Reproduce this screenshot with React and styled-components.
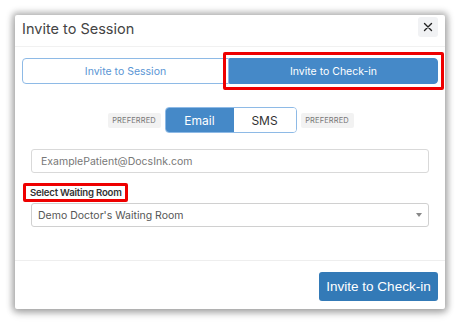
import React, { useState } from "react";
import styled, { createGlobalStyle, css } from "styled-components";

const GlobalStyle = createGlobalStyle`
  * { box-sizing: border-box; }
  html, body {
    margin: 0;
    background: #ffffff;
    font-family: Inter, "Liberation Sans", Arial, sans-serif;
  }
`;

const Page = styled.div`
  width: 460px;
  height: 324px;
  padding: 15px 15px 15px 15px;
`;

const Modal = styled.div`
  width: 430px;
  height: 294px;
  background: #fff;
  border-radius: 2px;
  box-shadow: 0 0 6px 3px rgba(0, 0, 0, 0.28), 0 4px 10px rgba(0, 0, 0, 0.15);
  display: flex;
  flex-direction: column;
`;

const Header = styled.div`
  display: flex;
  align-items: flex-start;
  justify-content: space-between;
  height: 32px;
  padding: 2px 7px 0 7px;
  border-bottom: 1px solid #f1f1f1;
`;

const Title = styled.div`
  font-size: 14.5px;
  line-height: 18px;
  margin-top: 3px;
  color: #444;
`;

const Close = styled.button`
  width: 20px;
  height: 20px;
  border: none;
  border-radius: 3px;
  background: #f1f2f4;
  display: flex;
  align-items: center;
  justify-content: center;
  padding: 0;
`;

const Body = styled.div`
  flex: 1;
  padding: 11px 7px 0 7px;
  display: flex;
  flex-direction: column;
`;

const Tabs = styled.div`
  display: flex;
  height: 26px;
`;

const Highlight = styled.div`
  position: relative;
  &::after {
    content: "";
    position: absolute;
    left: -6px;
    right: -6px;
    top: -6px;
    bottom: -6px;
    border: 3px solid #ee0000;
    border-radius: 2px;
    pointer-events: none;
  }
`;

const Tab = styled.button`
  height: 26px;
  border: 1px solid #8ebae6;
  font-family: inherit;
  font-size: 10.5px;
  padding: 0;
  ${(p) =>
    p.$active
      ? css`
          width: 209px;
          background: #4589c8;
          border-color: #4589c8;
          color: #fff;
          border-radius: 0 4px 4px 0;
        `
      : css`
          width: 208px;
          background: #fff;
          color: #5a95d4;
          border-radius: 4px 0 0 4px;
        `}
`;

const ChannelRow = styled.div`
  display: flex;
  justify-content: center;
  align-items: center;
  gap: 4px;
  margin-top: 23px;
  margin-left: 1px;
`;

const Badge = styled.span`
  width: 53px;
  height: 15px;
  display: flex;
  align-items: center;
  justify-content: center;
  background: #f2f2f2;
  border-radius: 2px;
  color: #777;
  font-size: 7.5px;
  letter-spacing: 0.1px;
`;

const Toggle = styled.div`
  display: flex;
  height: 26px;
  border: 1px solid #8ebae6;
  border-radius: 4px;
  overflow: hidden;
`;

const ToggleBtn = styled.button`
  border: none;
  font-family: inherit;
  font-size: 12px;
  padding: 0;
  width: ${(p) => p.$w}px;
  background: ${(p) => (p.$active ? "#4589c8" : "#fff")};
  color: ${(p) => (p.$active ? "#fff" : "#333")};
`;

const Field = styled.div`
  margin: 16px 9px 0 9px;
  height: 24px;
  border: 1px solid #d9d9d9;
  border-radius: 3px;
  display: flex;
  align-items: center;
  padding-left: 9px;
  font-size: 10.5px;
  color: #777;
`;

const LabelWrap = styled(Highlight)`
  align-self: flex-start;
  margin: 14px 0 0 8px;
  &::after {
    left: -7px;
    right: -6px;
    top: -4px;
    bottom: -4px;
  }
`;

const Label = styled.div`
  font-size: 9.6px;
  font-weight: 600;
  color: #333;
  letter-spacing: -0.2px;
`;

const Select = styled.div`
  margin: 5px 9px 0 9px;
  height: 24px;
  border: 1px solid #d0d0d0;
  border-radius: 3px;
  display: flex;
  align-items: center;
  justify-content: space-between;
  padding: 0 6px 0 6px;
  font-size: 10.5px;
  color: #555;
`;

const Caret = styled.span`
  width: 0;
  height: 0;
  border-left: 3px solid transparent;
  border-right: 3px solid transparent;
  border-top: 4px solid #888;
`;

const Footer = styled.div`
  height: 49px;
  border-top: 1px solid #eeeeee;
  display: flex;
  align-items: flex-start;
  justify-content: flex-end;
  padding: 11px 7px 0 0;
`;

const Primary = styled.button`
  width: 119px;
  height: 29px;
  border: none;
  border-radius: 3px;
  background: #337ab7;
  color: #fff;
  font-family: "Liberation Sans", Arial, sans-serif;
  font-size: 13.5px;
  padding: 0;
`;

export default function App() {
  const [mode, setMode] = useState("checkin");
  const [channel, setChannel] = useState("email");
  return (
    <Page>
      <GlobalStyle />
      <Modal>
        <Header>
          <Title>Invite to Session</Title>
          <Close aria-label="Close">
            <svg width="10" height="10" viewBox="0 0 10 10">
              <path d="M1.5 1.5L8.5 8.5M8.5 1.5L1.5 8.5" stroke="#222" strokeWidth="1.4" strokeLinecap="round" />
            </svg>
          </Close>
        </Header>
        <Body>
          <Tabs>
            <Tab $active={mode === "session"} onClick={() => setMode("session")}>
              Invite to Session
            </Tab>
            <Highlight>
              <Tab $active={mode === "checkin"} onClick={() => setMode("checkin")}>
                Invite to Check-in
              </Tab>
            </Highlight>
          </Tabs>
          <ChannelRow>
            <Badge>PREFERRED</Badge>
            <Toggle>
              <ToggleBtn $w={68} $active={channel === "email"} onClick={() => setChannel("email")}>
                Email
              </ToggleBtn>
              <ToggleBtn $w={62} $active={channel === "sms"} onClick={() => setChannel("sms")}>
                SMS
              </ToggleBtn>
            </Toggle>
            <Badge>PREFERRED</Badge>
          </ChannelRow>
          <Field>ExamplePatient@DocsInk.com</Field>
          <LabelWrap>
            <Label>Select Waiting Room</Label>
          </LabelWrap>
          <Select>
            Demo Doctor's Waiting Room
            <Caret />
          </Select>
        </Body>
        <Footer>
          <Primary>Invite to Check-in</Primary>
        </Footer>
      </Modal>
    </Page>
  );
}
